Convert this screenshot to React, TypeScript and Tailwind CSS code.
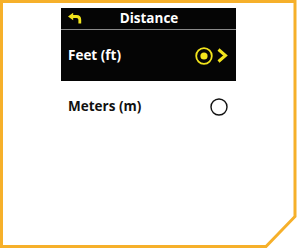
import React from "react";

function Frame() {
  return (
    <svg className="absolute inset-0" width="297" height="248" viewBox="0 0 297 248">
      <path
        d="M1.5 1.5 H295 V216.5 L266 246.5 H1.5 Z"
        fill="none"
        stroke="#f6b02a"
        strokeWidth="3"
      />
    </svg>
  );
}

function BackArrow() {
  return (
    <svg width="14" height="11" viewBox="0 0 14 11">
      <path d="M0 3.5 L5.2 -0.3 V7.3 Z" fill="#f2e41c" />
      <path d="M4 3.5 H8.5 Q11.8 3.5 11.8 6.8 V10.5" fill="none" stroke="#f2e41c" strokeWidth="2.8" />
    </svg>
  );
}

export default function App() {
  return (
    <div
      className="relative w-[297px] h-[248px] bg-white overflow-hidden"
      style={{ fontFamily: '"Open Sans", "Noto Sans", sans-serif' }}
    >
      <Frame />
      <div className="relative pt-[8px] pl-[61px] w-[236px]">
        <div className="w-[175px] bg-[#050505]">
          <div className="h-[21px] flex items-center relative">
            <div className="absolute left-[7px] top-[5px]">
              <BackArrow />
            </div>
            <div className="w-full text-center text-white font-bold text-[13.5px] leading-none pt-[1px] pl-[1px]">
              Distance
            </div>
          </div>
          <div className="h-[1px] bg-[#8a8a8a]" />
          <div className="h-[51px] flex items-center justify-between pl-[7px] pr-[8px]">
            <span className="text-white font-bold text-[13.5px] leading-none">Feet (ft)</span>
            <div className="flex items-center gap-[4px]">
              <svg width="18" height="18" viewBox="0 0 18 18">
                <circle cx="9" cy="9" r="7.8" fill="none" stroke="#f2e41c" strokeWidth="1.8" />
                <circle cx="9" cy="9" r="3.6" fill="#f2e41c" />
              </svg>
              <svg width="11" height="15" viewBox="0 0 11 15">
                <path d="M1.5 1.5 L8.5 7.5 L1.5 13.5" fill="none" stroke="#f2e41c" strokeWidth="3" />
              </svg>
            </div>
          </div>
        </div>
        <div className="w-[175px] h-[52px] flex items-center justify-between pl-[7px] pr-[8px]">
          <span className="text-[#111] font-bold text-[13.5px] leading-none">Meters (m)</span>
          <svg width="18" height="18" viewBox="0 0 18 18">
            <circle cx="9" cy="9" r="8" fill="none" stroke="#111" strokeWidth="1.4" />
          </svg>
        </div>
      </div>
    </div>
  );
}
